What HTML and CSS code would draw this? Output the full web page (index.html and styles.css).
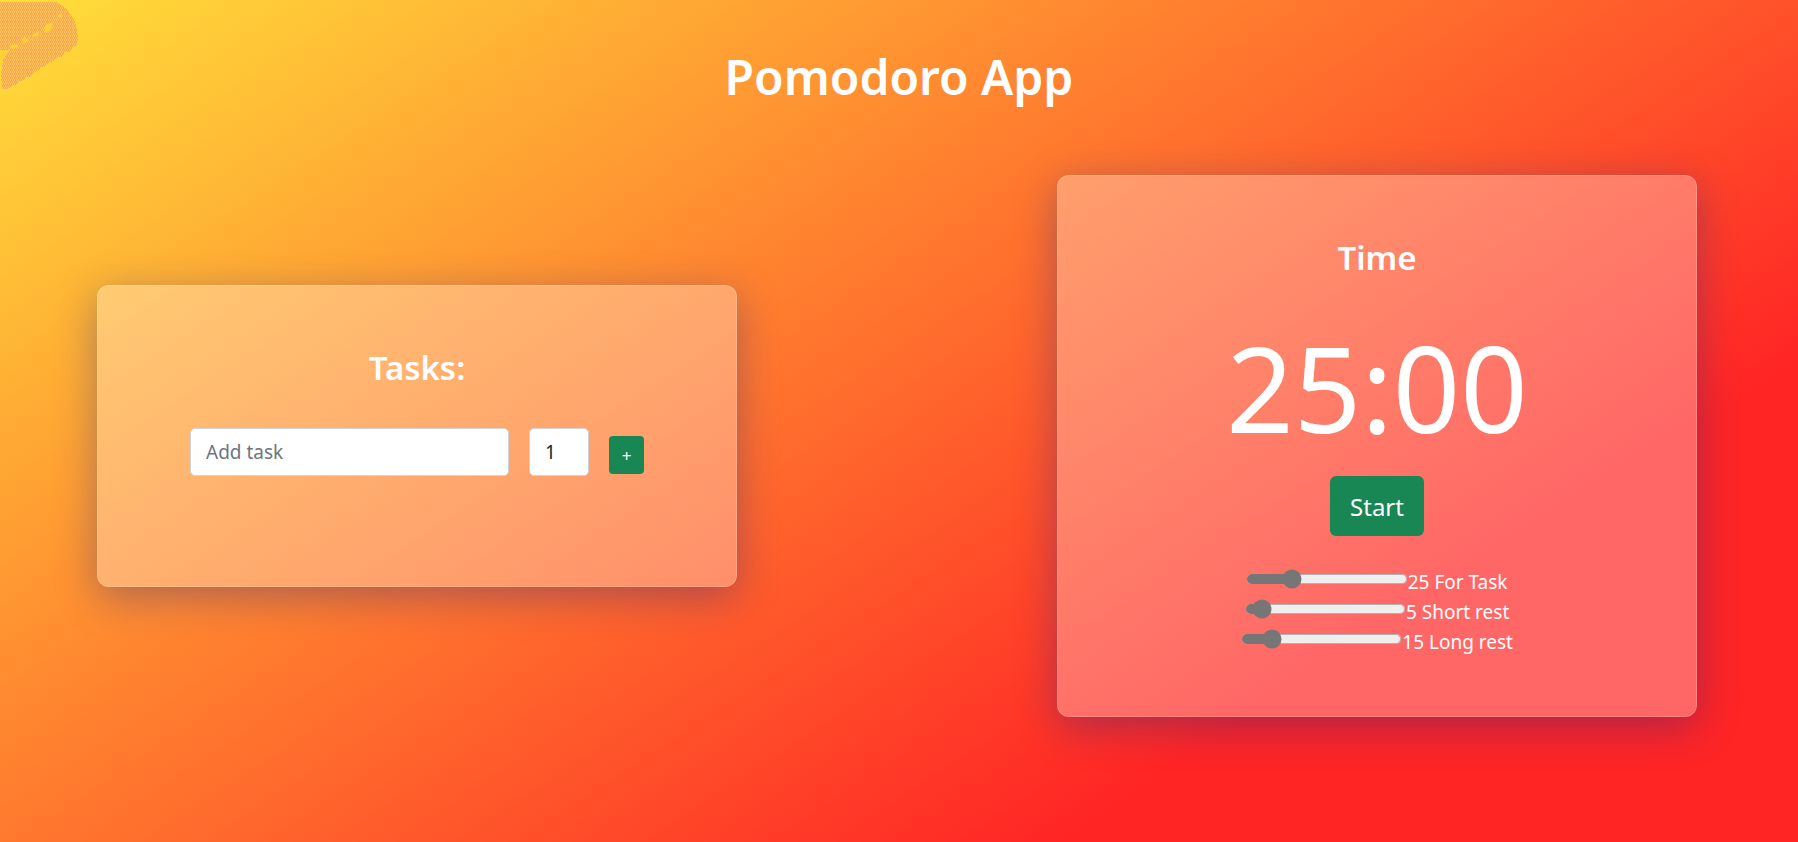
FILE: index.html
```html
<!DOCTYPE html>
<html lang="en">
<head>
<meta charset="utf-8">
<meta name="viewport" content="width=device-width, initial-scale=1">
<title>Pomodoro App</title>
<link rel="stylesheet" href="styles.css">
</head>
<body>
<svg class="leaf" viewBox="0 0 80 92" aria-hidden="true">
  <defs>
    <pattern id="grain" width="4" height="4" patternUnits="userSpaceOnUse">
      <rect width="4" height="4" fill="#f8ab3c"/>
      <path fill="#fdc36c" d="M0 0h1v1h-1zM2 0h1v1h-1zM1 1h1v2h-1zM3 2h1v1h-1zM0 3h1v1h-1zM2 3h1v1h-1z"/>
    </pattern>
  </defs>
  <path shape-rendering="crispEdges" fill="url(#grain)" d="M0 2H56L63 6L69 12L74 20L77 28L78 37L77 45L72 48L70 52L65 52L62 57L57 57L54 61L49 62L46 66L41 67L38 71L33 73L31 77L26 77L23 81L19 81L17 85L12 85L9 89L2 89L1 72L3 60L8 52L10 50L0 50Z"/>
  <path fill="#ffd038" d="M0 50H8L4 57L1 66H0ZM10 46L15 44L18 46L14 49L10 48ZM21 39L25 37L29 40L24 43ZM32 36L36 33L40 32L38 35L33 37ZM44 28L47 24L53 22L52 28L48 33L45 32ZM58 15L62 13V17L59 18Z"/>
  <path fill="none" stroke="#ffc942" stroke-width="1" stroke-dasharray="3 2" d="M8 50L18 47L30 40L44 33M24 40L34 34L44 29M52 23L59 17L65 15"/>
</svg>
<header class="header"><h1 class="title">Pomodoro App</h1></header>
<main class="board">
  <section class="card card-tasks">
    <h2 class="card-title">Tasks:</h2>
    <form class="task-form">
      <input class="field field-name" type="text" placeholder="Add task" aria-label="Add task">
      <input class="field field-count" type="text" inputmode="numeric" value="1" aria-label="Pomodoros">
      <button class="btn btn-add" type="button">+</button>
    </form>
  </section>
  <section class="card card-time">
    <h2 class="card-title">Time</h2>
    <p class="clock">25:00</p>
    <button class="btn btn-start" type="button">Start</button>
    <div class="settings">
      <div class="setting"><input class="slider" id="task" type="range" min="0" max="100" value="25"><label for="task">25 For Task</label></div>
      <div class="setting"><input class="slider" id="short" type="range" min="0" max="100" value="5"><label for="short">5 Short rest</label></div>
      <div class="setting"><input class="slider" id="long" type="range" min="0" max="100" value="15"><label for="long">15 Long rest</label></div>
    </div>
  </section>
</main>
</body>
</html>
```
FILE: styles.css
```css
* { box-sizing: border-box; }

body {
  margin: 0;
  min-height: 100vh;
  background: linear-gradient(147deg, #ffe03a 0%, #ff2525 76%) no-repeat;
  color: #fff;
  font-family: "Segoe UI", "Noto Sans", "Open Sans", sans-serif;
  font-size: 19px;
  line-height: 30px;
}

h1, h2, p { margin: 0; }

.leaf {
  position: absolute;
  top: 0;
  left: 0;
  width: 80px;
  height: 92px;
}

.header { padding: 47px 0 68px; text-align: center; }

.title {
  font-size: 48px;
  font-weight: 600;
  line-height: 60px;
}

.board {
  display: flex;
  align-items: center;
  justify-content: space-between;
  padding: 0 101px 0 97px;
}

.card {
  display: flex;
  flex-direction: column;
  align-items: center;
  width: 40%;
  padding: 61px 20px;
  background: rgba(255, 255, 255, 0.3);
  border: 1px solid rgba(255, 255, 255, 0.18);
  border-radius: 12px;
  box-shadow: 0 10px 40px rgba(31, 38, 135, 0.37);
}

.card-tasks { margin-bottom: 20px; padding-bottom: 110px; }
.card-time { padding-bottom: 60px; }

.card-title {
  font-size: 33px;
  font-weight: 600;
  line-height: 42px;
}

.task-form {
  display: flex;
  align-items: center;
  gap: 20px;
  margin-top: 39px;
}

.field {
  height: 48px;
  padding: 0 15px;
  border: 1px solid #ced4da;
  border-radius: 5px;
  background: #fff;
  color: #212529;
  font: inherit;
}

.field::placeholder { color: #6c757d; opacity: 1; }
.field-name { width: 319px; }
.field-count { width: 60px; }

.btn {
  border: 0;
  background: #198754;
  color: #fff;
  font-family: inherit;
}

.btn-add {
  width: 35px;
  height: 38px;
  margin-top: 6px;
  padding: 0;
  border-radius: 4px;
  font-size: 17px;
}

.clock {
  margin-top: 34px;
  font-size: 118px;
  line-height: 150px;
}

.btn-start {
  height: 60px;
  margin-top: 13px;
  padding: 0 20px;
  border-radius: 6px;
  font-size: 24px;
}

.settings { margin-top: 30px; }

.setting {
  display: flex;
  justify-content: center;
  height: 30px;
  line-height: 32px;
}

.slider {
  zoom: 1.25;
  width: 129px;
  height: 16px;
  margin: 2px 0 0;
  accent-color: #767676;
}
```
